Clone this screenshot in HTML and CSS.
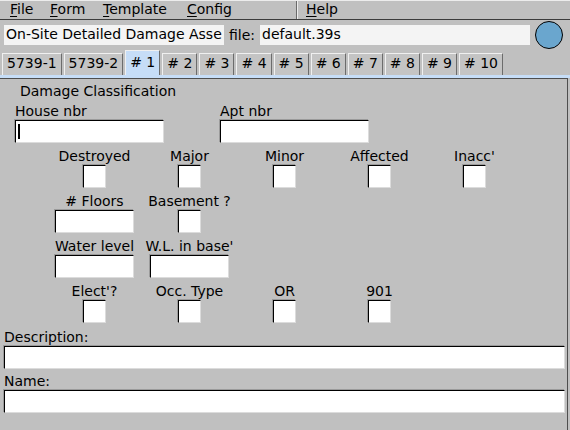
FILE: index.html
```html
<!DOCTYPE html>
<html>
<head>
<meta charset="utf-8">
<link rel="stylesheet" href="styles.css">
</head>
<body>
<div class="menubar">
  <span class="menu m-file"><u>F</u>ile</span>
  <span class="menu m-form"><u>F</u>orm</span>
  <span class="menu m-tmpl"><u>T</u>emplate</span>
  <span class="menu m-conf"><u>C</u>onfig</span>
  <span class="menusep"></span>
  <span class="menu"><u>H</u>elp</span>
</div>
<div class="titlebar">
  <div class="field title-field">On-Site Detailed Damage Asse</div>
  <span class="file-label">file:</span>
  <div class="field file-field">default.39s</div>
  <svg class="lamp" width="30" height="30" viewBox="0 0 30 30"><circle cx="15" cy="15" r="13.5" fill="#6aa6ce" stroke="#000" stroke-width="1"/></svg>
</div>
<div class="tabs">
  <div class="tab">5739-1</div>
  <div class="tab">5739-2</div>
  <div class="tab selected"># 1</div>
  <div class="tab"># 2</div>
  <div class="tab"># 3</div>
  <div class="tab"># 4</div>
  <div class="tab"># 5</div>
  <div class="tab"># 6</div>
  <div class="tab"># 7</div>
  <div class="tab"># 8</div>
  <div class="tab"># 9</div>
  <div class="tab"># 10</div>
</div>
<div class="stripe"></div>
<div class="panel">
  <div class="section-title">Damage Classification</div>
  <div class="house-row">
    <div class="house-col">
      <div class="lbl">House nbr</div>
      <div class="entry wide"><span class="cursor"></span></div>
    </div>
    <div class="house-col">
      <div class="lbl">Apt nbr</div>
      <div class="entry wide"></div>
    </div>
  </div>
  <div class="grid row1">
    <div class="cell"><div class="lbl">Destroyed</div><div class="entry box"></div></div>
    <div class="cell"><div class="lbl">Major</div><div class="entry box"></div></div>
    <div class="cell"><div class="lbl">Minor</div><div class="entry box"></div></div>
    <div class="cell"><div class="lbl">Affected</div><div class="entry box"></div></div>
    <div class="cell"><div class="lbl">Inacc'</div><div class="entry box"></div></div>
  </div>
  <div class="grid rowN">
    <div class="cell"><div class="lbl"># Floors</div><div class="entry mid"></div></div>
    <div class="cell"><div class="lbl">Basement ?</div><div class="entry box"></div></div>
  </div>
  <div class="grid rowN">
    <div class="cell"><div class="lbl">Water level</div><div class="entry mid"></div></div>
    <div class="cell"><div class="lbl">W.L. in base'</div><div class="entry mid"></div></div>
  </div>
  <div class="grid rowN">
    <div class="cell"><div class="lbl">Elect'?</div><div class="entry box"></div></div>
    <div class="cell"><div class="lbl">Occ. Type</div><div class="entry box"></div></div>
    <div class="cell"><div class="lbl">OR</div><div class="entry box"></div></div>
    <div class="cell"><div class="lbl">901</div><div class="entry box"></div></div>
  </div>
  <div class="lbl desc-lbl">Description:</div>
  <div class="entry full"></div>
  <div class="lbl name-lbl">Name:</div>
  <div class="entry full"></div>
</div>
</body>
</html>
```
FILE: styles.css
```css
* { box-sizing: border-box; }
html, body { margin: 0; padding: 0; }
body {
  width: 570px;
  height: 430px;
  overflow: hidden;
  background: #c0c0c0;
  font: 14px/17px "DejaVu Sans", sans-serif;
  color: #000;
}
.menubar {
  display: flex;
  align-items: flex-start;
  height: 20px;
  border-top: 1px solid #ececec;
  border-bottom: 1px solid #3c3c3c;
  padding-left: 2px;
}
.menu { padding: 0 8px; white-space: nowrap; }
.m-file { width: 40px; }
.m-form { width: 53px; }
.m-tmpl { width: 84px; }
.m-conf { width: 62px; }
.menu u { text-decoration-thickness: 1px; text-underline-offset: 2px; }
.menusep {
  width: 2px;
  height: 18px;
  margin-left: 55px;
  border-left: 1px solid #6a6a6a;
  border-right: 1px solid #ececec;
}
.titlebar {
  display: flex;
  align-items: center;
  height: 30px;
  padding-left: 4px;
}
.field {
  height: 20px;
  padding: 1px 2px;
  background: #f4f4f4;
  white-space: nowrap;
  overflow: hidden;
}
.title-field { width: 220px; }
.file-label { margin-left: 5px; width: 31px; }
.file-field { width: 270px; }
.lamp { margin-left: 4px; display: block; }
.tabs {
  display: flex;
  align-items: flex-end;
  gap: 2px;
  height: 25px;
  padding-left: 2px;
}
.tab {
  height: 22px;
  padding: 0 4px;
  line-height: 19px;
  background: #c4c4c4;
  border-top: 1px solid #f0f0f0;
  border-left: 1px solid #f0f0f0;
  border-right: 1px solid #6c6c6c;
  white-space: nowrap;
}
.tab.selected {
  height: 25px;
  padding-top: 2px;
  background: #c6ddf7;
}
.stripe { height: 3px; background: #c6ddf7; }
.panel {
  width: 568px;
  height: 352px;
  border-top: 1px solid #4e4e4e;
  border-right: 1px solid #4e4e4e;
  padding: 0 2px 0 4px;
}
.section-title { margin-top: 4px; padding-left: 16px; }
.house-row { display: flex; margin-top: 3px; padding-left: 11px; }
.house-col { width: 205px; }
.entry {
  position: relative;
  background: #fff;
  border: 1px solid;
  border-color: #000 #dcdcdc #dcdcdc #000;
  box-shadow: -1px -1px 0 #9a9a9a;
  height: 23px;
}
.wide { width: 149px; }
.mid { width: 79px; }
.box { width: 23px; }
.full { width: 561px; }
.cursor {
  position: absolute;
  left: 2px;
  top: 3px;
  width: 2px;
  height: 15px;
  background: #000;
}
.grid {
  display: grid;
  grid-template-columns: repeat(5, 95px);
  margin-left: 43px;
}
.row1 { margin-top: 5px; }
.rowN { margin-top: 5px; }
.cell {
  display: flex;
  flex-direction: column;
  align-items: center;
}
.lbl { white-space: nowrap; }
.desc-lbl { margin-top: 6px; }
.name-lbl { margin-top: 4px; }
```
